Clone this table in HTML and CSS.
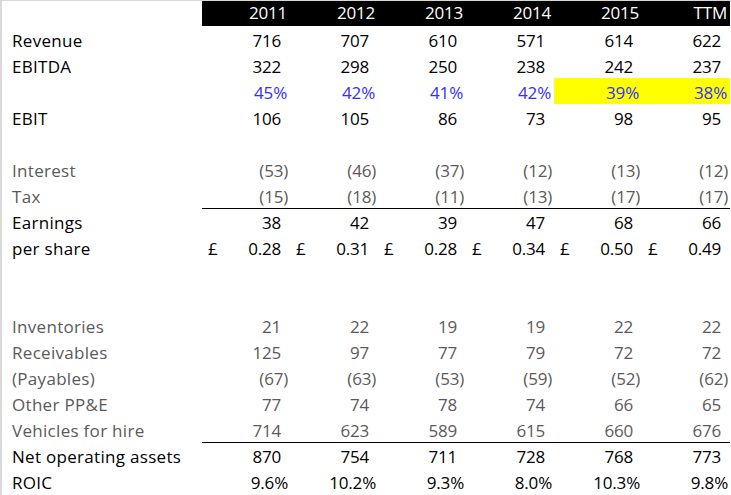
FILE: index.html
```html
<!DOCTYPE html>
<html>
<head>
<meta charset="utf-8">
<link rel="stylesheet" href="styles.css">
<title>Financials</title>
</head>
<body>
<div class="sheet">
  <div class="row head">
    <div class="lbl"></div>
    <div class="v">2011</div><div class="v">2012</div><div class="v">2013</div><div class="v">2014</div><div class="v">2015</div><div class="v">TTM</div>
  </div>
  <div class="row">
    <div class="lbl">Revenue</div>
    <div class="v">716</div><div class="v">707</div><div class="v">610</div><div class="v">571</div><div class="v">614</div><div class="v">622</div>
  </div>
  <div class="row">
    <div class="lbl">EBITDA</div>
    <div class="v">322</div><div class="v">298</div><div class="v">250</div><div class="v">238</div><div class="v">242</div><div class="v">237</div>
  </div>
  <div class="row pct">
    <div class="lbl"></div>
    <div class="v">45%</div><div class="v">42%</div><div class="v">41%</div><div class="v">42%</div><div class="v hl">39%</div><div class="v hl">38%</div>
  </div>
  <div class="row">
    <div class="lbl">EBIT</div>
    <div class="v">106</div><div class="v">105</div><div class="v">86</div><div class="v">73</div><div class="v">98</div><div class="v">95</div>
  </div>
  <div class="row"></div>
  <div class="row gray">
    <div class="lbl">Interest</div>
    <div class="v neg">(53)</div><div class="v neg">(46)</div><div class="v neg">(37)</div><div class="v neg">(12)</div><div class="v neg">(13)</div><div class="v neg">(12)</div>
  </div>
  <div class="row gray">
    <div class="lbl">Tax</div>
    <div class="v neg">(15)</div><div class="v neg">(18)</div><div class="v neg">(11)</div><div class="v neg">(13)</div><div class="v neg">(17)</div><div class="v neg">(17)</div>
  </div>
  <div class="row total">
    <div class="lbl">Earnings</div>
    <div class="v">38</div><div class="v">42</div><div class="v">39</div><div class="v">47</div><div class="v">68</div><div class="v">66</div>
  </div>
  <div class="row">
    <div class="lbl">per share</div>
    <div class="v cur"><span>£</span><span>0.28</span></div>
    <div class="v cur"><span>£</span><span>0.31</span></div>
    <div class="v cur"><span>£</span><span>0.28</span></div>
    <div class="v cur"><span>£</span><span>0.34</span></div>
    <div class="v cur"><span>£</span><span>0.50</span></div>
    <div class="v cur"><span>£</span><span>0.49</span></div>
  </div>
  <div class="row"></div>
  <div class="row"></div>
  <div class="row gray">
    <div class="lbl">Inventories</div>
    <div class="v">21</div><div class="v">22</div><div class="v">19</div><div class="v">19</div><div class="v">22</div><div class="v">22</div>
  </div>
  <div class="row gray">
    <div class="lbl">Receivables</div>
    <div class="v">125</div><div class="v">97</div><div class="v">77</div><div class="v">79</div><div class="v">72</div><div class="v">72</div>
  </div>
  <div class="row gray">
    <div class="lbl">(Payables)</div>
    <div class="v neg">(67)</div><div class="v neg">(63)</div><div class="v neg">(53)</div><div class="v neg">(59)</div><div class="v neg">(52)</div><div class="v neg">(62)</div>
  </div>
  <div class="row gray">
    <div class="lbl">Other PP&amp;E</div>
    <div class="v">77</div><div class="v">74</div><div class="v">78</div><div class="v">74</div><div class="v">66</div><div class="v">65</div>
  </div>
  <div class="row gray">
    <div class="lbl">Vehicles for hire</div>
    <div class="v">714</div><div class="v">623</div><div class="v">589</div><div class="v">615</div><div class="v">660</div><div class="v">676</div>
  </div>
  <div class="row total">
    <div class="lbl">Net operating assets</div>
    <div class="v">870</div><div class="v">754</div><div class="v">711</div><div class="v">728</div><div class="v">768</div><div class="v">773</div>
  </div>
  <div class="row">
    <div class="lbl">ROIC</div>
    <div class="v neg">9.6%</div><div class="v neg">10.2%</div><div class="v neg">9.3%</div><div class="v neg">8.0%</div><div class="v neg">10.3%</div><div class="v neg">9.8%</div>
  </div>
</div>
</body>
</html>
```
FILE: styles.css
```css
html, body {
  margin: 0;
  padding: 0;
  background: #ffffff;
}

body {
  font-family: "Open Sans", "Liberation Sans", sans-serif;
  font-size: 17px;
  color: #000000;
  overflow: hidden;
}

.sheet {
  width: 729px;
  height: 494px;
  border-left: 2px solid #d9d9d9;
  border-top: 1px solid #d9d9d9;
  display: flex;
  flex-direction: column;
}

.row {
  display: grid;
  grid-template-columns: 200px repeat(6, 88px);
  height: 26px;
  flex: none;
}

.row > div {
  box-sizing: border-box;
  height: 26px;
  line-height: 23px;
  padding-top: 3px;
  white-space: nowrap;
}

.lbl {
  padding-left: 10px;
  letter-spacing: 0.3px;
}

.v {
  text-align: right;
  padding-right: 9px;
  letter-spacing: -0.2px;
}

.v.neg {
  padding-right: 2px;
}

.head {
  height: 25px;
}

.head > div {
  height: 25px;
  padding-top: 0;
  line-height: 24px;
}

.head .v {
  background: #000000;
  color: #ffffff;
  padding-right: 3px;
}

.pct .v {
  color: #3030ff;
  padding-right: 3px;
}

.pct .v.hl {
  background: #ffff00;
}

.gray {
  color: #5a5a5a;
}

.total .v {
  border-top: 1px solid #000000;
  padding-top: 2px;
}

.cur {
  display: flex;
  justify-content: space-between;
  padding-left: 6px;
}
```
